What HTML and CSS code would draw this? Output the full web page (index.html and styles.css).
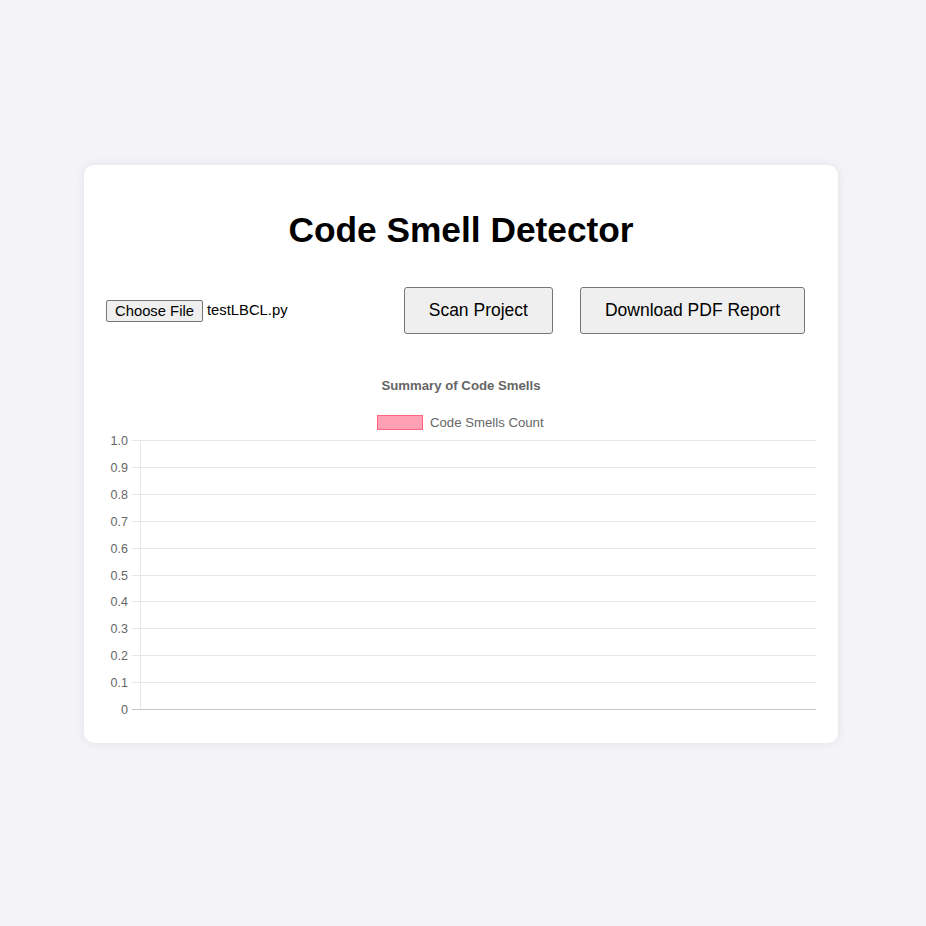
FILE: index.html
```html
<!DOCTYPE html>
<html lang="en">
<head>
<meta charset="utf-8">
<title>Code Smell Detector</title>
<link rel="stylesheet" href="styles.css">
</head>
<body>
<main class="card">
  <h1 class="title">Code Smell Detector</h1>
  <div class="controls">
    <div class="file-group">
      <span class="file-btn">Choose File</span>
      <span class="file-name">testLBCL.py</span>
    </div>
    <div class="actions">
      <button class="btn" type="button">Scan Project</button>
      <button class="btn" type="button">Download PDF Report</button>
    </div>
  </div>
  <svg class="chart" width="710" height="361" viewBox="0 0 710 361" xmlns="http://www.w3.org/2000/svg">
    <text class="chart-title" x="355" y="30" text-anchor="middle">Summary of Code Smells</text>
    <rect x="271.5" y="55.5" width="45" height="14" fill="rgba(255,99,132,0.6)" stroke="rgb(255,99,132)" stroke-width="1"/>
    <text class="legend-text" x="324" y="67">Code Smells Count</text>
    <g stroke="#e6e6e6" stroke-width="1">
      <line x1="26" y1="80.5" x2="710" y2="80.5"/>
      <line x1="26" y1="107.5" x2="710" y2="107.5"/>
      <line x1="26" y1="134.5" x2="710" y2="134.5"/>
      <line x1="26" y1="161.5" x2="710" y2="161.5"/>
      <line x1="26" y1="188.5" x2="710" y2="188.5"/>
      <line x1="26" y1="215.5" x2="710" y2="215.5"/>
      <line x1="26" y1="241.5" x2="710" y2="241.5"/>
      <line x1="26" y1="268.5" x2="710" y2="268.5"/>
      <line x1="26" y1="295.5" x2="710" y2="295.5"/>
      <line x1="26" y1="322.5" x2="710" y2="322.5"/>
      <line x1="34.5" y1="80" x2="34.5" y2="349"/>
    </g>
    <line x1="26" y1="349.5" x2="710" y2="349.5" stroke="#c6c6c6" stroke-width="1"/>
    <g class="tick-labels" text-anchor="end">
      <text x="22" y="84.5">1.0</text>
      <text x="22" y="111.5">0.9</text>
      <text x="22" y="138.5">0.8</text>
      <text x="22" y="165.5">0.7</text>
      <text x="22" y="192.5">0.6</text>
      <text x="22" y="219.5">0.5</text>
      <text x="22" y="245.5">0.4</text>
      <text x="22" y="272.5">0.3</text>
      <text x="22" y="299.5">0.2</text>
      <text x="22" y="326.5">0.1</text>
      <text x="22" y="353.5">0</text>
    </g>
  </svg>
</main>
</body>
</html>
```

FILE: styles.css
```css
html, body {
  margin: 0;
  padding: 0;
}

body {
  background: #f4f4f8;
  font-family: "Liberation Sans", Arial, sans-serif;
  color: #000;
  padding-top: 165px;
  padding-right: 4px;
  min-height: 926px;
  box-sizing: border-box;
}

.card {
  display: block;
  width: 754px;
  box-sizing: border-box;
  margin: 0 auto;
  background: #fff;
  border-radius: 10px;
  box-shadow: 0 0 10px rgba(0, 0, 0, 0.08);
  padding: 22px 22px 22px;
}

.title {
  margin: 23px 0 37px;
  font-size: 35.3px;
  font-weight: bold;
  text-align: center;
  line-height: 40px;
}

.controls {
  display: flex;
  align-items: center;
  padding-right: 11px;
}

.file-group {
  flex: 1;
  display: flex;
  align-items: center;
  gap: 4px;
  font-size: 14.8px;
}

.file-btn {
  display: inline-block;
  background: #efefef;
  border: 1px solid #767676;
  border-radius: 2px;
  padding: 2px 8px 1px;
  line-height: 17px;
  color: #000;
}

.file-name {
  line-height: 17px;
}

.actions {
  display: flex;
  gap: 27px;
}

.btn {
  font-family: "Liberation Sans", Arial, sans-serif;
  font-size: 17.5px;
  line-height: 21px;
  padding: 12px 24px;
  background: #efefef;
  border: 1px solid #767676;
  border-radius: 3px;
  color: #000;
}

.chart {
  display: block;
  margin-top: 26px;
  font-family: "Liberation Sans", Arial, sans-serif;
}

.chart-title {
  font-size: 13.2px;
  font-weight: bold;
  fill: #666;
}

.legend-text {
  font-size: 13.2px;
  fill: #666;
}

.tick-labels {
  font-size: 12.5px;
  fill: #666;
}
```
